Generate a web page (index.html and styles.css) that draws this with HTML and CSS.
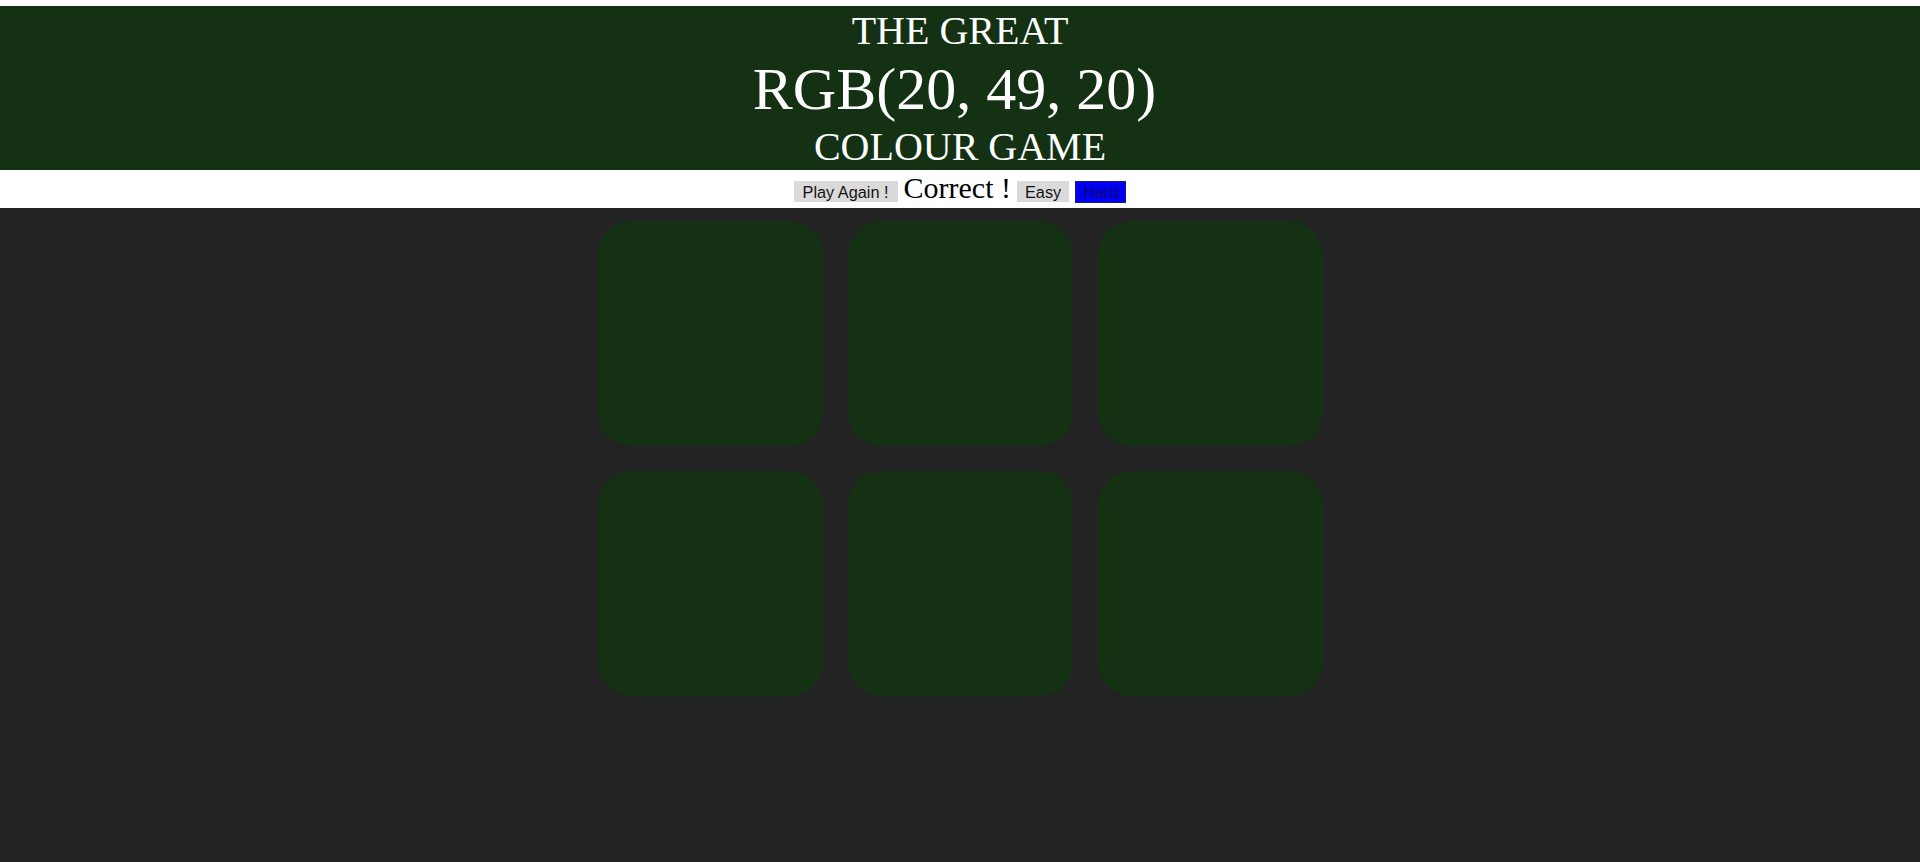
FILE: index.html
```html
<!DOCTYPE html>
<html lang="en">
<head>
<meta charset="utf-8">
<title>The Great Colour Game</title>
<link rel="stylesheet" href="styles.css">
</head>
<body>
<div class="top-strip"></div>
<h1 class="title">
  <span class="title-line title-first">THE GREAT</span>
  <span class="title-rgb">RGB(20, 49, 20)</span>
  <span class="title-line title-last">COLOUR GAME</span>
</h1>
<div class="bar">
  <button class="btn btn-play">Play Again !</button>
  <span class="message">Correct !</span>
  <button class="btn">Easy</button>
  <button class="btn btn-selected">Hard</button>
</div>
<div class="board">
  <div class="square"></div>
  <div class="square"></div>
  <div class="square"></div>
  <div class="square"></div>
  <div class="square"></div>
  <div class="square"></div>
</div>
</body>
</html>
```

FILE: styles.css
```css
html, body {
  margin: 0;
  padding: 0;
}

body {
  background: #232323;
  font-family: "Liberation Serif", "Times New Roman", serif;
}

.top-strip {
  height: 6px;
  background: #ffffff;
}

.title {
  margin: 0;
  background: rgb(20, 49, 20);
  color: #ffffff;
  font-weight: normal;
  text-align: center;
  display: flex;
  flex-direction: column;
  align-items: center;
}

.title-line {
  display: block;
  font-size: 40px;
}

.title-first {
  line-height: 49px;
}

.title-last {
  line-height: 46px;
}

.title-rgb {
  display: block;
  font-size: 60px;
  line-height: 69px;
  padding-right: 11px;
}

.bar {
  height: 38px;
  box-sizing: border-box;
  padding-top: 1px;
  background: #ffffff;
  display: flex;
  justify-content: center;
  align-items: baseline;
  gap: 6px;
}

.btn {
  font-family: "Liberation Sans", Arial, sans-serif;
  font-size: 16.3px;
  line-height: 18px;
  padding: 2px 8px 1px;
  border: none;
  border-radius: 0;
  background: #dadada;
  color: #111111;
  margin: 0;
}

.btn-play {
  padding: 2px 9px 1px;
}

.btn-selected {
  background: #0000f5;
  color: #08086e;
  border: 1px solid #1a1a70;
  padding: 1px 7px 1px;
}

.message {
  font-family: "Liberation Serif", "Times New Roman", serif;
  font-size: 30px;
  line-height: 34px;
  color: #000000;
}

.board {
  width: 750px;
  margin: 0 auto;
  padding: 12.5px;
  box-sizing: border-box;
  display: grid;
  grid-template-columns: repeat(3, 1fr);
  gap: 25px;
}

.square {
  aspect-ratio: 1 / 1;
  background: rgb(20, 49, 20);
  border-radius: 15%;
}
```
